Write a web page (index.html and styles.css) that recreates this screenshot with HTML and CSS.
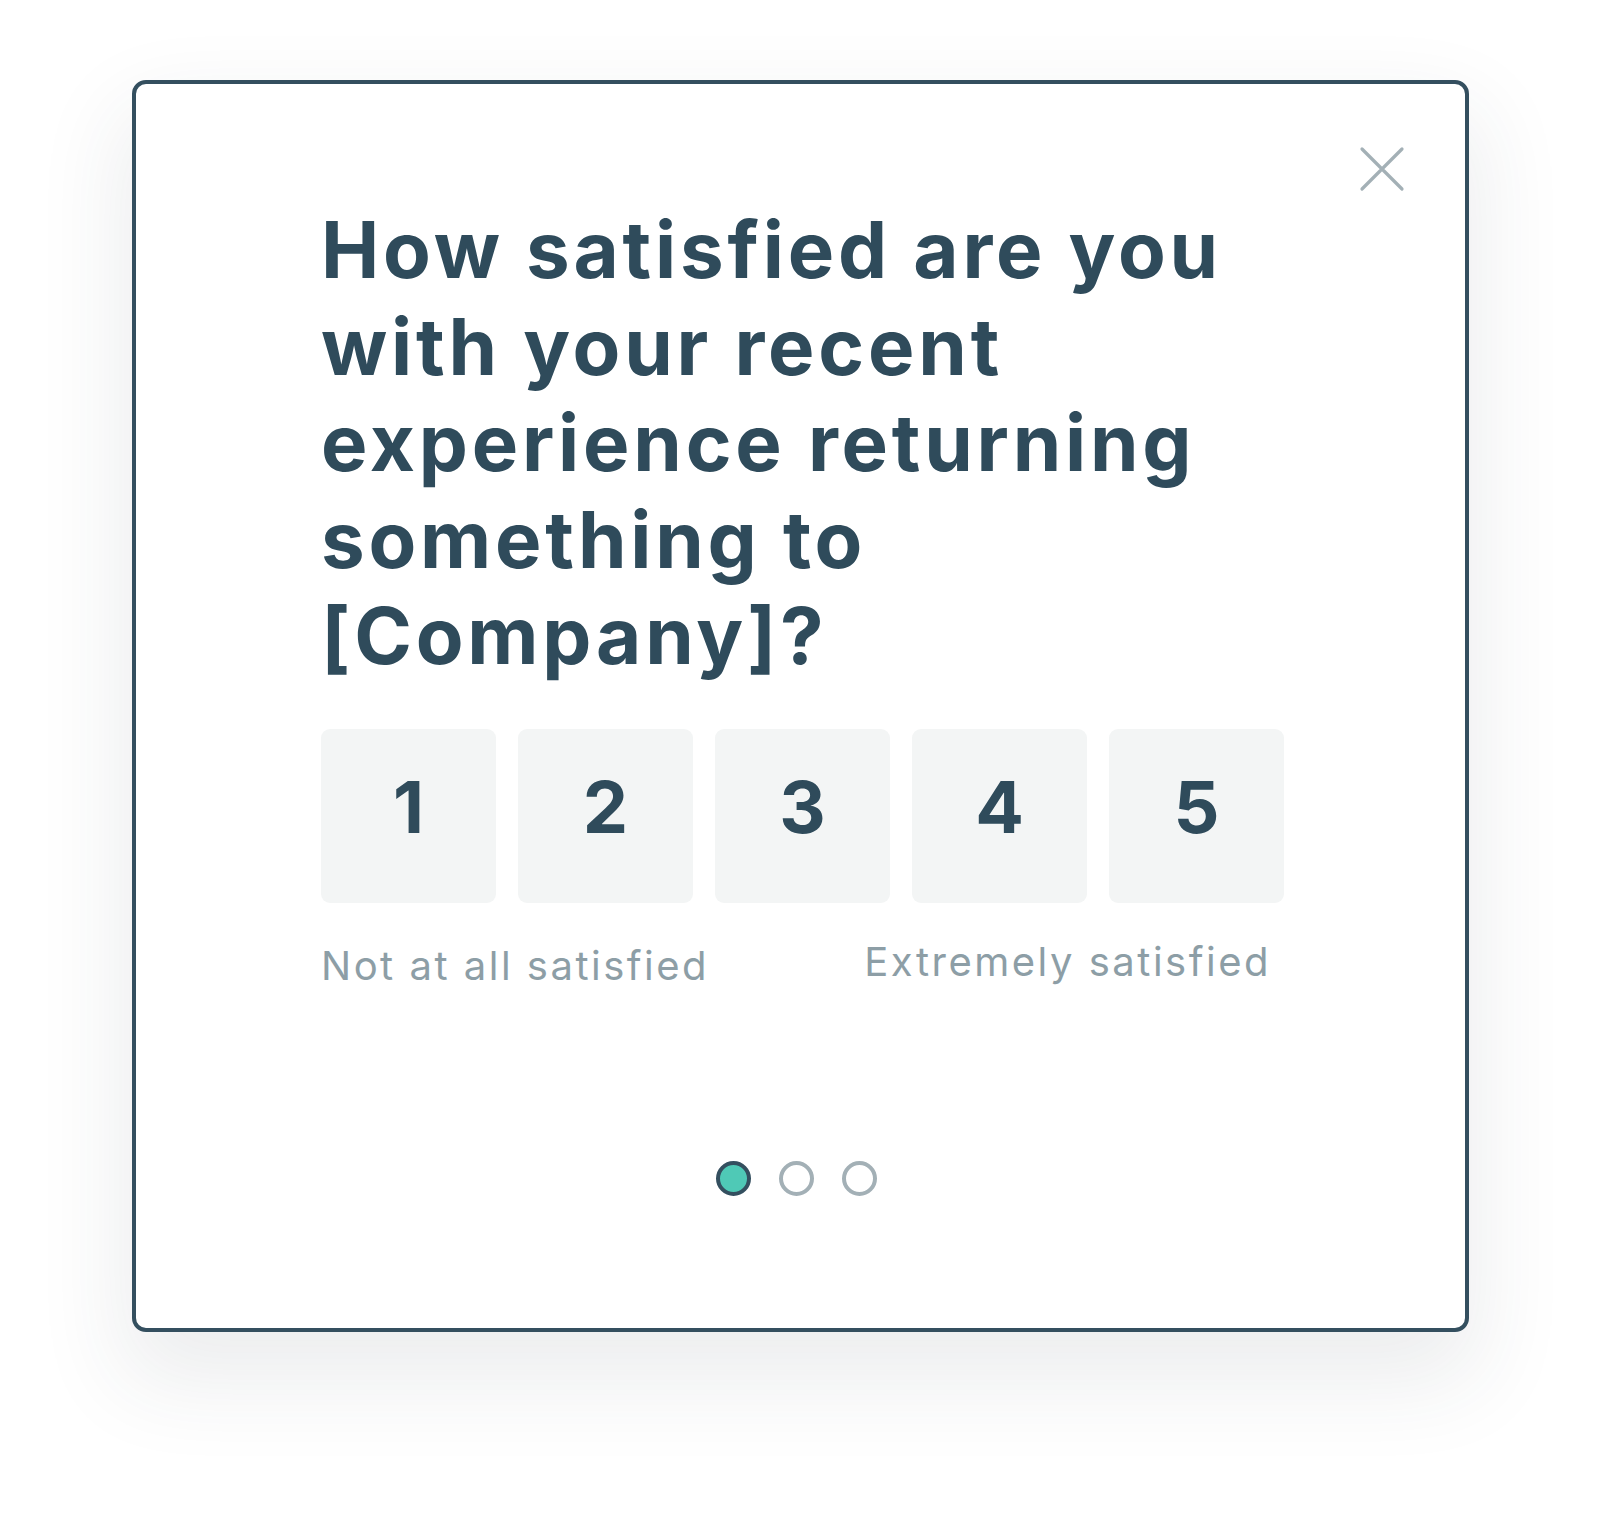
FILE: index.html
```html
<!DOCTYPE html>
<html>
<head>
<meta charset="utf-8">
<link rel="stylesheet" href="styles.css">
</head>
<body>
<div class="card">
  <button class="close" aria-label="Close">
    <svg width="46" height="46" viewBox="0 0 46 46"><path d="M3 3 L43 43 M43 3 L3 43" stroke="#a3b0b6" stroke-width="3.2" stroke-linecap="round" fill="none"/></svg>
  </button>
  <div class="content">
    <h1 class="question">How satisfied are you with your recent experience returning something to [Company]?</h1>
    <div class="scale">
      <div class="opt">1</div>
      <div class="opt">2</div>
      <div class="opt">3</div>
      <div class="opt">4</div>
      <div class="opt">5</div>
    </div>
    <div class="labels">
      <span class="lab lab-left">Not at all satisfied</span>
      <span class="lab lab-right">Extremely satisfied</span>
    </div>
  </div>
  <div class="dots">
    <span class="dot active"></span>
    <span class="dot"></span>
    <span class="dot"></span>
  </div>
</div>
</body>
</html>
```

FILE: styles.css
```css
html, body {
  margin: 0;
  padding: 0;
  background: #ffffff;
}
body {
  font-family: Inter, Lato, "Open Sans", sans-serif;
  height: 1516px;
  overflow: hidden;
}
.card {
  position: relative;
  box-sizing: border-box;
  width: 1337px;
  height: 1252px;
  margin: 80px 0 0 132px;
  border: 4px solid #344f5f;
  border-radius: 14px;
  background: #fff;
  box-shadow: 0 40px 90px 10px rgba(40, 55, 70, 0.09);
  display: flex;
  flex-direction: column;
}
.close {
  position: absolute;
  top: 62px;
  right: 60px;
  background: none;
  border: 0;
  padding: 0;
  width: 46px;
  height: 46px;
  cursor: pointer;
}
.close svg { display: block; }
.content {
  padding: 118px 0 0 185px;
  width: 963px;
}
.question {
  margin: 0;
  font-size: 78px;
  line-height: 96.5px;
  font-weight: 700;
  color: #2f4b5b;
  letter-spacing: 3.8px;
  width: 960px;
}
.scale {
  display: flex;
  gap: 22px;
  margin-top: 44px;
}
.opt {
  width: 175px;
  height: 174px;
  border-radius: 9px;
  background: #f3f5f5;
  color: #2f4b5b;
  font-weight: 700;
  font-size: 72px;
  display: flex;
  align-items: center;
  justify-content: center;
  padding-bottom: 18px;
  box-sizing: border-box;
}
.labels {
  display: flex;
  justify-content: space-between;
  margin-top: 38px;
  padding-right: 13px;
}
.lab {
  color: #8d9ea6;
  font-size: 40px;
  font-weight: 400;
  letter-spacing: 2.5px;
}
.lab-right { margin-top: -4px; }
.dots {
  margin-top: auto;
  margin-bottom: 132px;
  display: flex;
  justify-content: center;
  gap: 28px;
  padding-right: 8px;
}
.dot {
  box-sizing: border-box;
  width: 35px;
  height: 35px;
  border-radius: 50%;
  border: 4px solid #a3b0b6;
  background: #fff;
}
.dot.active {
  background: #4fc9b6;
  border-color: #344f5f;
}
```
